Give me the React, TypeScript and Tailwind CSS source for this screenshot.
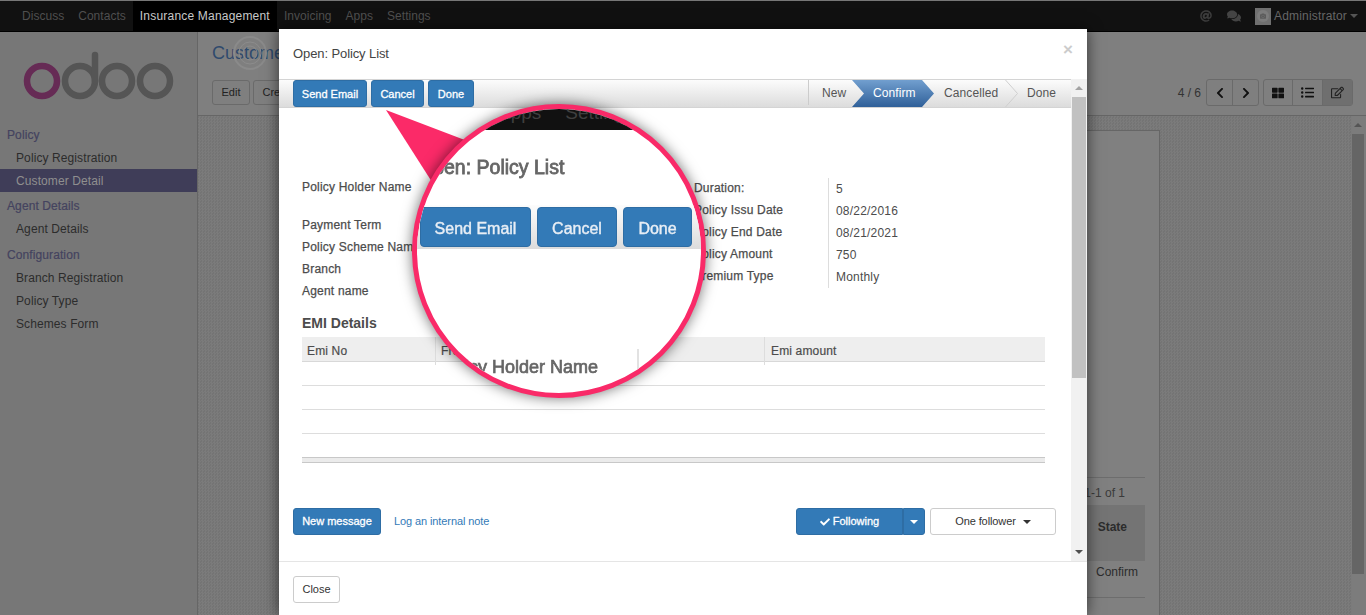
import React from "react";
import { FaAt, FaCheck, FaChevronLeft, FaChevronRight, FaComments, FaListUl, FaRegEdit, FaThLarge, FaCamera } from "react-icons/fa";

const navItems = ["Discuss", "Contacts", "Insurance Management", "Invoicing", "Apps", "Settings"];

function Caret({ className }: { className: string }) {
  return <span className={"inline-block h-0 w-0 border-x-[4px] border-t-[4px] border-x-transparent " + className} />;
}

function Logo() {
  return (
    <svg width="197" height="68" viewBox="0 0 197 68" className="block" fill="none">
      <circle cx="42" cy="31" r="15" stroke="#662b55" strokeWidth="6.5" />
      <circle cx="80" cy="31" r="15" stroke="#555555" strokeWidth="6.5" />
      <path d="M95 31V5" stroke="#555555" strokeWidth="6.5" strokeLinecap="round" />
      <circle cx="117" cy="31" r="15" stroke="#555555" strokeWidth="6.5" />
      <circle cx="155" cy="31" r="15" stroke="#555555" strokeWidth="6.5" />
    </svg>
  );
}

function SideGroup({ title, items, active, gap }: { title: string; items: string[]; active?: string; gap: string }) {
  return (
    <div className={gap}>
      <div className="flex h-[23px] items-center pl-[7px] text-[12px] tracking-[0.1px] text-[#44435f] [-webkit-text-stroke:0.2px]">{title}</div>
      {items.map((i) => (
        <div
          key={i}
          className={"flex h-[23px] items-center pl-[16px] text-[12px] tracking-[0.1px] " + (i === active ? "bg-[#3f3d58] text-[#8f8f8f]" : "text-[#2c2c2c]")}
        >
          {i}
        </div>
      ))}
    </div>
  );
}

function Background() {
  return (
    <div className="flex h-full flex-col bg-[#7f7f7f]">
      <nav className="flex h-[32px] shrink-0 items-stretch border-t-[1px] border-b-[1px] border-t-[#777] border-b-black bg-[#111] pl-[15px] text-[12px] tracking-[0.03px] text-[#4f4f4f]">
        {navItems.map((n) => (
          <div
            key={n}
            className={"flex items-center px-[7px] " + (n === "Insurance Management" ? "bg-black tracking-[0.2px] text-[#c8c8c8]" : "")}
          >
            {n}
          </div>
        ))}
        <div className="ml-auto flex items-center pr-[8px] tracking-[0.17px]">
          <FaAt className="mr-[15px] text-[12px] text-[#3c3c3c]" />
          <FaComments className="mr-[14px] text-[14px] text-[#444]" />
          <div className="mr-[3px] flex h-[17px] w-[16px] items-center justify-center bg-[#707070]">
            <div className="flex h-[12px] w-[12px] items-center justify-center rounded-full bg-[#7c7c7c]">
              <FaCamera className="text-[6px] text-[#5c5c5c]" />
            </div>
          </div>
          <span className="text-[#666]">Administrator</span>
          <Caret className="ml-[3px] border-t-[#555]" />
        </div>
      </nav>
      <div className="flex min-h-0 flex-1">
        <aside className="w-[198px] shrink-0 border-r border-[#666] bg-[#777]">
          <div className="h-[91px] pt-[18px]">
            <Logo />
          </div>
          <SideGroup title="Policy" items={["Policy Registration", "Customer Detail"]} active="Customer Detail" gap="mb-[2px]" />
          <SideGroup title="Agent Details" items={["Agent Details"]} gap="mb-[3px]" />
          <SideGroup title="Configuration" items={["Branch Registration", "Policy Type", "Schemes Form"]} gap="mb-0" />
        </aside>
        <main className="flex min-w-0 flex-1 flex-col">
          <header className="h-[84px] shrink-0 border-b border-[#666] pl-[14px] pr-[13px] pt-[10px]">
            <div className="h-[37px] text-[18px] leading-[22px] text-[#2f4a6d]">Customer Detail</div>
            <div className="flex items-center text-[11px] text-[#222]">
              <div className="flex h-[25px] w-[38px] items-center justify-center rounded-[3px] border border-[#6a6a6a]">Edit</div>
              <div className="ml-[3px] flex h-[25px] w-[52px] items-center justify-center rounded-[3px] border border-[#6a6a6a]">Create</div>
              <div className="ml-auto mr-[5px] text-[12px] text-[#333]">4 / 6</div>
              <div className="flex h-[27px] rounded-[3px] border border-[#6a6a6a]">
                <div className="flex w-[26px] items-center justify-center border-r border-[#6a6a6a]"><FaChevronLeft className="text-[12px] text-[#111]" /></div>
                <div className="flex w-[25px] items-center justify-center"><FaChevronRight className="text-[12px] text-[#111]" /></div>
              </div>
              <div className="ml-[4px] flex h-[27px] rounded-[3px] border border-[#6a6a6a]">
                <div className="flex w-[29px] items-center justify-center border-r border-[#6a6a6a]"><FaThLarge className="text-[12px] text-[#111]" /></div>
                <div className="flex w-[30px] items-center justify-center border-r border-[#6a6a6a]"><FaListUl className="text-[13px] text-[#111]" /></div>
                <div className="flex w-[29px] items-center justify-center bg-[#6f6f6f]"><FaRegEdit className="text-[13px] text-[#222]" /></div>
              </div>
            </div>
          </header>
          <div className="flex min-h-0 flex-1 bg-[#777] bg-[repeating-conic-gradient(#7b7b7b_0_25%,#747474_0_50%)] bg-[length:3px_3px]">
            <div className="min-w-0 flex-1 pt-[14px]">
              <div className="ml-[82px] h-[600px] w-[880px] border border-[#666] bg-[#808080] pr-[14px] text-[12px] text-[#2c2c2c]">
                <div className="h-[346px]" />
                <div className="flex h-[28px] items-center justify-end border-t border-[#6d6d6d] pr-[20px] pt-[3px] text-[#3a3a3a]">1-1 of 1</div>
                <div className="flex h-[56px] items-center justify-end bg-[#747474] pb-[12px] pr-[18px] font-bold">State</div>
                <div className="flex h-[37px] items-start justify-end border-b border-[#6d6d6d] pr-[7px] pt-[2px]">Confirm</div>
              </div>
            </div>
            <div className="flex w-[14px] shrink-0 flex-col bg-[#7c7c7c] pr-[2px]">
              <div className="flex h-[18px] items-center justify-center"><Caret className="rotate-180 border-t-[#555]" /></div>
              <div className="h-[440px] bg-[#656565]" />
            </div>
          </div>
        </main>
      </div>
    </div>
  );
}

const bar = "bg-gradient-to-b from-[#fcfcfc] to-[#dcdcdc]";
const primary = "flex items-center justify-center rounded-[3px] border border-[#2e6da4] bg-[#337ab7] text-white [-webkit-text-stroke:0.3px]";

function StatusBar() {
  return (
    <div className={"flex h-[29px] shrink-0 items-stretch border-y border-[#d4d4d4] pl-[14px] " + bar}>
      <button className={primary + " h-[27px] w-[74px] pt-[1px] text-[11px]"}>Send Email</button>
      <button className={primary + " ml-[4px] h-[27px] w-[53px] pt-[1px] text-[11px]"}>Cancel</button>
      <button className={primary + " ml-[4px] h-[27px] w-[46px] pt-[1px] text-[11px]"}>Done</button>
      <div className="ml-auto flex w-[263px] items-stretch pb-[2px] text-[12px] tracking-[0.1px] text-[#555]">
        <div className="flex w-[44px] items-center border-l border-[#ccc] pl-[13px]">New</div>
        <div className="mb-[-2px] flex w-[82px] items-center bg-gradient-to-b from-[#729fcf] to-[#2f6099] pb-[2px] pl-[21px] text-white [clip-path:polygon(0_0,calc(100%-12px)_0,100%_50%,calc(100%-12px)_100%,0_100%,12px_50%)]">
          Confirm
        </div>
        <div className="flex w-[71px] items-center pl-[10px]">Cancelled</div>
        <svg width="13" height="27" viewBox="0 0 13 27" fill="none" className="mb-[-2px] block shrink-0">
          <path d="M0.5 0L12.5 13.5L0.5 27" stroke="#cfcfcf" />
        </svg>
        <div className="flex flex-1 items-center pl-[9px]">Done</div>
      </div>
    </div>
  );
}

function Form() {
  const left: [string, string][] = [
    ["Policy Holder Name", "h-[38px]"],
    ["Payment Term", "h-[22px]"],
    ["Policy Scheme Name", "h-[22px]"],
    ["Branch", "h-[22px]"],
    ["Agent name", "h-[22px]"],
  ];
  const right = [
    ["Duration:", "5"],
    ["Policy Issu Date", "08/22/2016"],
    ["Policy End Date", "08/21/2021"],
    ["Policy Amount", "750"],
    ["Premium Type", "Monthly"],
  ];
  return (
    <div className="flex pl-[23px] pt-[68px] text-[12px] tracking-[0.2px] text-[#4c4c4c]">
      <div className="w-[392px] shrink-0">
        {left.map(([l, h]) => (
          <div key={l} className={h + " leading-[22px] [-webkit-text-stroke:0.25px]"}>{l}</div>
        ))}
      </div>
      <div className="pt-[2px]">
        {right.map(([l, v]) => (
          <div key={l} className="flex h-[22px]">
            <div className="w-[135px] border-r border-[#ddd] leading-[20px] [-webkit-text-stroke:0.25px]">{l}</div>
            <div className="pl-[7px] leading-[23px]">{v}</div>
          </div>
        ))}
      </div>
    </div>
  );
}

function EmiTable() {
  return (
    <div className="ml-[23px] mr-[26px] text-[12px] tracking-[0.15px] text-[#4c4c4c]">
      <div className="mt-[11px] h-[24px] text-[14px] font-bold leading-[20px] tracking-normal">EMI Details</div>
      <div className="grid h-[25px] grid-cols-[134px_329px_1fr] border-b border-[#d8d8d8] bg-[#eee] leading-[28px] [-webkit-text-stroke:0.2px]">
        <div className="border-r border-[#ddd] pl-[5px]">Emi No</div>
        <div className="border-r border-[#ddd] pl-[5px]">From Date</div>
        <div className="pl-[6px]">Emi amount</div>
      </div>
      <div className="h-[24px] border-b border-[#ddd]" />
      <div className="h-[24px] border-b border-[#ddd]" />
      <div className="h-[24px] border-b border-[#ddd]" />
      <div className="h-[24px] border-b border-[#c8c8c8]" />
      <div className="h-[5px] border-b border-[#c8c8c8] bg-[#ebebeb]" />
    </div>
  );
}

function Chatter() {
  return (
    <div className="mt-[45px] flex items-center pl-[14px] pr-[15px] text-[11px]">
      <button className={primary + " h-[27px] w-[88px]"}>New message</button>
      <span className="ml-[13px] tracking-[-0.1px] text-[#337ab7]">Log an internal note</span>
      <div className={primary + " ml-auto h-[27px] w-[107px] rounded-r-none"}>
        <FaCheck className="mr-[3px] text-[10px]" />
        Following
      </div>
      <div className={primary + " h-[27px] w-[22px] rounded-l-none border-l-[#2e6da4]"}>
        <Caret className="border-t-white" />
      </div>
      <div className="ml-[5px] flex h-[27px] w-[126px] items-center justify-center rounded-[3px] border border-[#ccc] tracking-[-0.1px] text-[#333]">
        One follower
        <Caret className="ml-[7px] border-t-[#333]" />
      </div>
    </div>
  );
}

function Modal() {
  return (
    <div className="absolute left-[279px] top-[29px] flex h-[586px] w-[808px] flex-col bg-white shadow-[0_0_14px_rgba(0,0,0,0.6)]">
      <div className="flex h-[50px] shrink-0 items-start justify-between pl-[14px] pr-[14px] pt-[17px]">
        <div className="text-[13px] leading-[15px] tracking-[-0.1px] text-[#444]">Open: Policy List</div>
        <div className="text-[17px] font-bold leading-[8px] text-[#ccc]">×</div>
      </div>
      <div className="flex min-h-0 flex-1 border-b border-[#e5e5e5]">
        <div className="flex min-w-0 flex-1 flex-col overflow-hidden">
          <StatusBar />
          <Form />
          <EmiTable />
          <Chatter />
          <div className="mt-[24px] pl-[378px] text-[12px] text-[#444]">Today</div>
        </div>
        <div className="flex w-[16px] shrink-0 flex-col items-center bg-[#f1f1f1]">
          <div className="flex h-[18px] w-full items-center justify-center"><Caret className="rotate-180 border-t-[#a3a3a3]" /></div>
          <div className="h-[281px] w-[14px] bg-[#c1c1c1]" />
          <div className="flex flex-1 items-end pb-[7px]"><Caret className="border-t-[#505050]" /></div>
        </div>
      </div>
      <div className="flex h-[53px] shrink-0 items-center pl-[14px] pt-[2px]">
        <button className="h-[27px] w-[47px] rounded-[3px] border border-[#ccc] text-[11px] text-[#333]">Close</button>
      </div>
    </div>
  );
}

function Lens() {
  const b = "flex h-[40px] shrink-0 items-center justify-center rounded-[4px] border border-[#2e6da4] bg-[#337ab7] pt-[3px] text-[16px] text-[#e8eef5] blur-[0.3px] [-webkit-text-stroke:0.4px]";
  return (
    <>
      <svg className="absolute left-[380px] top-[104px]" width="100" height="100" viewBox="0 0 100 100">
        <polygon points="6,6 90,38 90,80 52,78" fill="#fb2a68" />
      </svg>
      <div className="absolute left-[412px] top-[104px] h-[294px] w-[294px] overflow-hidden rounded-full border-[5px] border-[#f92a68] bg-white shadow-[0_0_14px_rgba(0,0,0,0.55)]">
        <div className="flex h-[21px] items-center overflow-hidden bg-[#111] pb-[12px] pl-[81px] text-[19px] text-[#3f3f3f]">
          <span>Apps</span>
          <span className="ml-[24px]">Settings</span>
        </div>
        <div className="ml-[1px] mt-[24px] whitespace-nowrap text-[19.5px] leading-[26px] text-[#666] blur-[0.3px] [-webkit-text-stroke:0.8px]">
          Open: Policy List
        </div>
        <div className={"mt-[25px] flex h-[44px] items-center pl-[3px] " + bar}>
          <div className={b + " w-[111px]"}>Send Email</div>
          <div className={b + " ml-[6px] w-[80px]"}>Cancel</div>
          <div className={b + " ml-[6px] w-[69px]"}>Done</div>
        </div>
        <div className="mt-[100px] flex items-center">
          <div className="flex w-[181px] shrink-0 justify-end whitespace-nowrap pt-[1px] text-[18px] leading-[28px] text-[#666] blur-[0.3px] [-webkit-text-stroke:0.7px]">
            Policy Holder Name
          </div>
          <div className="ml-[39px] h-[34px] w-[2px] bg-[#e2e2e2]" />
        </div>
      </div>
    </>
  );
}

export default function App() {
  return (
    <div className="relative h-screen w-full overflow-hidden font-['Liberation_Sans',Arial,sans-serif]">
      <Background />
      <svg className="absolute left-[232px] top-[35px]" width="36" height="36" viewBox="0 0 36 36" fill="none">
        <circle cx="18" cy="18" r="16" stroke="#8a8a8a" strokeWidth="2" />
        <circle cx="18" cy="18" r="11" stroke="#8c8c8c" />
        <circle cx="18" cy="18" r="7" stroke="#8c8c8c" />
      </svg>
      <Modal />
      <Lens />
    </div>
  );
}
